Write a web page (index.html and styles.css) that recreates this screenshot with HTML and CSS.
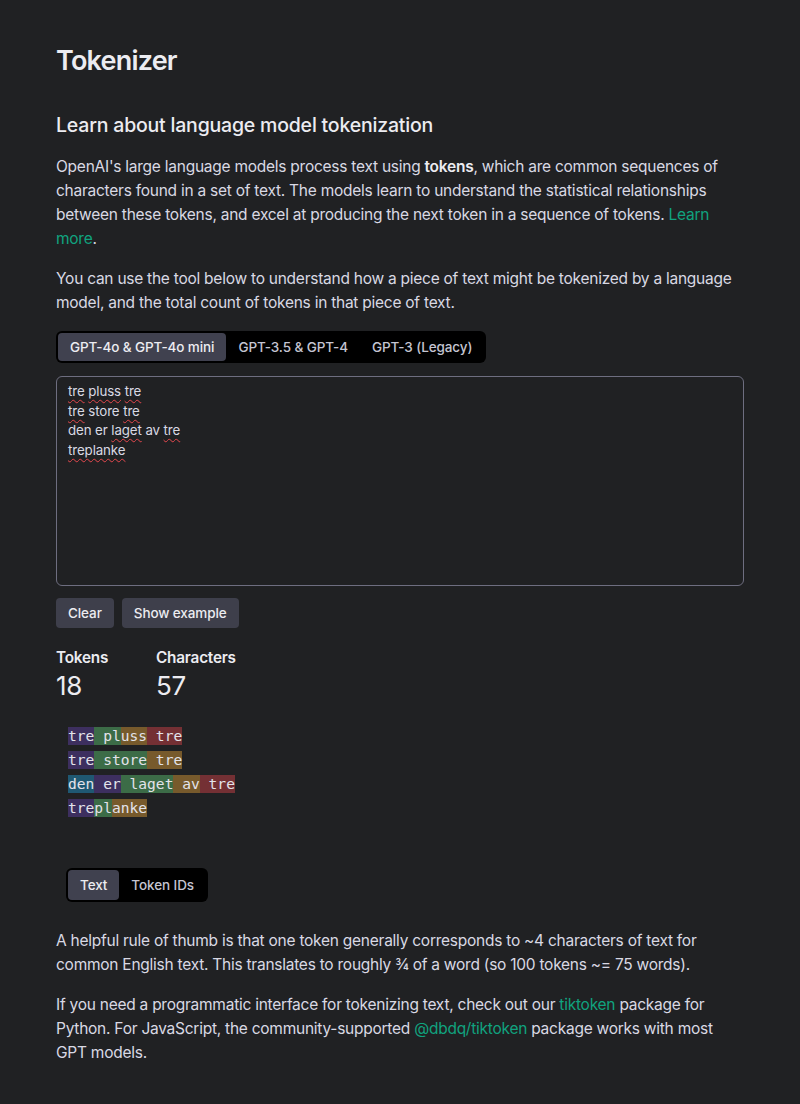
FILE: index.html
```html
<!DOCTYPE html>
<html lang="en">
<head>
<meta charset="utf-8">
<title>Tokenizer</title>
<link rel="stylesheet" href="styles.css">
</head>
<body>
<main class="page">
  <h1 class="title">Tokenizer</h1>
  <h2 class="subtitle">Learn about language model tokenization</h2>
  <p class="para">OpenAI's large language models process text using <strong>tokens</strong>, which are common sequences of characters found in a set of text. The models learn to understand the statistical relationships between these tokens, and excel at producing the next token in a sequence of tokens. <a class="link" href="#">Learn more</a>.</p>
  <p class="para">You can use the tool below to understand how a piece of text might be tokenized by a language model, and the total count of tokens in that piece of text.</p>

  <div class="seg seg-models">
    <button class="seg-btn active">GPT-4o &amp; GPT-4o mini</button>
    <button class="seg-btn">GPT-3.5 &amp; GPT-4</button>
    <button class="seg-btn">GPT-3 (Legacy)</button>
  </div>

  <div class="input" role="textbox" aria-multiline="true"><div><span class="sp">tre</span> <span class="sp">pluss</span> <span class="sp">tre</span></div><div><span class="sp">tre</span> store <span class="sp">tre</span></div><div>den er <span class="sp">laget</span> av <span class="sp">tre</span></div><div><span class="sp">treplanke</span></div></div>

  <div class="actions">
    <button class="btn">Clear</button>
    <button class="btn">Show example</button>
  </div>

  <div class="stats">
    <div class="stat stat-tokens">
      <div class="stat-label">Tokens</div>
      <div class="stat-value">18</div>
    </div>
    <div class="stat">
      <div class="stat-label">Characters</div>
      <div class="stat-value">57</div>
    </div>
  </div>

  <div class="tokens">
    <div class="tok-line"><span class="t t0">tre</span><span class="t t1"> pl</span><span class="t t2">uss</span><span class="t t3"> tre</span></div>
    <div class="tok-line"><span class="t t0">tre</span><span class="t t1"> store</span><span class="t t2"> tre</span></div>
    <div class="tok-line"><span class="t t4">den</span><span class="t t0"> er</span><span class="t t1"> laget</span><span class="t t2"> av</span><span class="t t3"> tre</span></div>
    <div class="tok-line"><span class="t t0">tre</span><span class="t t1">pl</span><span class="t t2">anke</span></div>
  </div>

  <div class="view-toggle">
    <div class="seg seg-view">
      <button class="seg-btn active">Text</button>
      <button class="seg-btn">Token IDs</button>
    </div>
  </div>

  <p class="para">A helpful rule of thumb is that one token generally corresponds to ~4 characters of text for common English text. This translates to roughly ¾ of a word (so 100 tokens ~= 75 words).</p>
  <p class="para">If you need a programmatic interface for tokenizing text, check out our <a class="link" href="#">tiktoken</a> package for Python. For JavaScript, the community-supported <a class="link" href="#">@dbdq/tiktoken</a> package works with most GPT models.</p>
</main>
</body>
</html>
```

FILE: styles.css
```css
* { box-sizing: border-box; }
html, body { margin: 0; padding: 0; }
body {
  background: #202123;
  color: #ececf1;
  font-family: Inter, "Noto Sans", sans-serif;
}
.page {
  width: 688px;
  margin-left: 56px;
  padding-top: 43px;
  padding-bottom: 30px;
}
.title {
  font-size: 27px;
  font-weight: 600;
  line-height: 36px;
  margin: 0 0 32px 0;
  letter-spacing: -0.8px;
}
.subtitle {
  font-size: 19.5px;
  font-weight: 500;
  line-height: 28px;
  margin: 0 0 16px 0;
  letter-spacing: -0.2px;
}
.para {
  font-size: 15.5px;
  line-height: 24px;
  margin: 0 0 16px 0;
  color: #d9d9e3;
  letter-spacing: -0.25px;
}
.para strong { color: #ececf1; font-weight: 600; }
.link { color: #10a37f; text-decoration: none; }

.seg {
  display: flex;
  width: fit-content;
  background: #000;
  border-radius: 6px;
  padding: 2px;
}
.seg-btn {
  font-family: Inter, "Noto Sans", sans-serif;
  background: transparent;
  border: 0;
  color: #c5c5d2;
  font-size: 13.5px;
  font-weight: 500;
  border-radius: 4px;
  height: 28px;
  padding: 0 12px;
  letter-spacing: -0.1px;
}
.seg-btn.active {
  background: #40414f;
  color: #ececf1;
}
.seg-models { margin-top: 16px; }

.input {
  margin-top: 13px;
  height: 210px;
  border: 1px solid #6e6e80;
  border-radius: 6px;
  padding: 5px 11px;
  font-size: 13.3px;
  line-height: 19.7px;
  color: #d9d9e3;
  letter-spacing: -0.1px;
}
.sp {
  text-decoration: underline wavy #e5484d;
  text-decoration-thickness: 1px;
  text-underline-offset: 3px;
}

.actions {
  display: flex;
  gap: 8px;
  margin-top: 12px;
}
.btn {
  font-family: Inter, "Noto Sans", sans-serif;
  background: #3e3f4b;
  color: #ececf1;
  border: 0;
  border-radius: 4px;
  height: 30px;
  padding: 0 12px;
  font-size: 13.5px;
  font-weight: 500;
  letter-spacing: -0.1px;
}

.stats {
  display: flex;
  margin-top: 20px;
}
.stat-tokens { width: 100px; }
.stat-label {
  font-size: 15.3px;
  font-weight: 600;
  line-height: 20px;
  letter-spacing: -0.2px;
}
.stat-value {
  font-size: 26px;
  font-weight: 400;
  line-height: 36px;
  letter-spacing: -0.3px;
}

.tokens {
  margin-top: 14px;
  padding: 6px 12px;
  font-family: "DejaVu Sans Mono", "Liberation Mono", monospace;
  font-size: 14.6px;
  line-height: 24px;
  color: #e3e3ea;
}
.tok-line { white-space: pre; }
.t { padding: 0 0 1px 0; }
.t0 { background: #3d2f5f; }
.t1 { background: #3c6c47; }
.t2 { background: #775a2c; }
.t3 { background: #743034; }
.t4 { background: #1f5872; }

.view-toggle {
  margin-top: 42px;
  padding-left: 10px;
  margin-bottom: 27px;
}
.seg-view .seg-btn { height: 30px; padding: 0 12px; }
```
